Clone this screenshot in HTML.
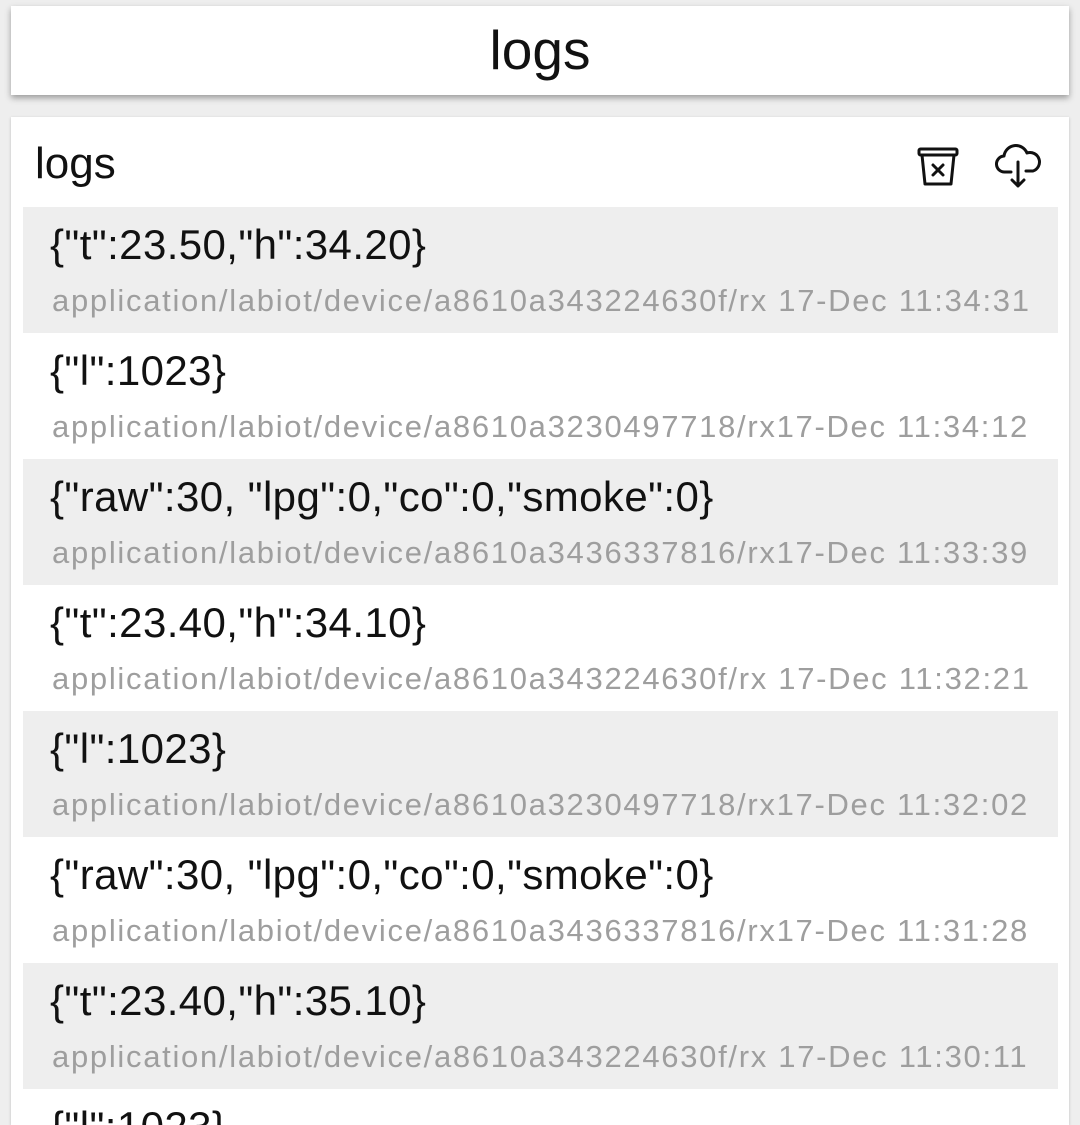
<!DOCTYPE html>
<html><head><meta charset="utf-8"><style>
html,body{margin:0;width:1080px;height:1125px;overflow:hidden;background:#eeeeee;font-family:"Liberation Sans",sans-serif;}
.hdr{position:absolute;left:11px;top:6px;width:1058px;height:89px;background:#fff;box-shadow:0 3px 6px rgba(0,0,0,.35);text-align:center;font-size:55px;line-height:88px;color:#111;}
.card{position:absolute;left:11px;top:117px;width:1058px;height:1008px;background:#fff;box-shadow:0 1px 3px rgba(0,0,0,.2);overflow:hidden;}
.ct{position:absolute;left:24px;top:22px;font-size:44px;color:#111;}
.rows{position:absolute;left:12px;top:90px;width:1035px;}
.row{height:126px;position:relative;}
.row:nth-child(odd){background:#eeeeee;}
.m{position:absolute;left:27px;top:14px;font-size:42px;color:#111;white-space:nowrap;letter-spacing:0.4px;}
.s{position:absolute;left:29px;top:76px;font-size:31px;color:#9e9e9e;white-space:nowrap;letter-spacing:1.7px;}
svg{position:absolute;}
</style></head><body>
<div class="hdr">logs</div>
<div class="card">
<div class="ct">logs</div>
<svg style="left:905px;top:29px" width="44" height="42" viewBox="0 0 44 42" fill="none" stroke="#111" stroke-width="3" stroke-linejoin="round" stroke-linecap="round"><rect x="3" y="3" width="38" height="6" rx="1.5"/><path d="M6 9 L9 38 H35 L38 9"/><path d="M17 19 L27 29 M27 19 L17 29"/></svg>
<svg style="left:984px;top:27px" width="48" height="45" viewBox="0 0 48 45" fill="none" stroke="#111" stroke-width="3" stroke-linejoin="round" stroke-linecap="round"><path d="M16 28 H10 A8 8 0 0 1 9 12 A12 12 0 0 1 32 9 A9 9 0 0 1 38 27 H31"/><path d="M23 18 V42 M17 36 L23 42 L29 36"/></svg>
<div class="rows">
<div class="row"><div class="m">{"t":23.50,"h":34.20}</div><div class="s">application/labiot/device/a8610a343224630f/rx 17-Dec 11:34:31</div></div>
<div class="row"><div class="m">{"l":1023}</div><div class="s">application/labiot/device/a8610a3230497718/rx17-Dec 11:34:12</div></div>
<div class="row"><div class="m">{"raw":30, "lpg":0,"co":0,"smoke":0}</div><div class="s">application/labiot/device/a8610a3436337816/rx17-Dec 11:33:39</div></div>
<div class="row"><div class="m">{"t":23.40,"h":34.10}</div><div class="s">application/labiot/device/a8610a343224630f/rx 17-Dec 11:32:21</div></div>
<div class="row"><div class="m">{"l":1023}</div><div class="s">application/labiot/device/a8610a3230497718/rx17-Dec 11:32:02</div></div>
<div class="row"><div class="m">{"raw":30, "lpg":0,"co":0,"smoke":0}</div><div class="s">application/labiot/device/a8610a3436337816/rx17-Dec 11:31:28</div></div>
<div class="row"><div class="m">{"t":23.40,"h":35.10}</div><div class="s">application/labiot/device/a8610a343224630f/rx 17-Dec 11:30:11</div></div>
<div class="row" style="background:#fff"><div class="m">{"l":1023}</div></div>
</div>
</div>
</body></html>
